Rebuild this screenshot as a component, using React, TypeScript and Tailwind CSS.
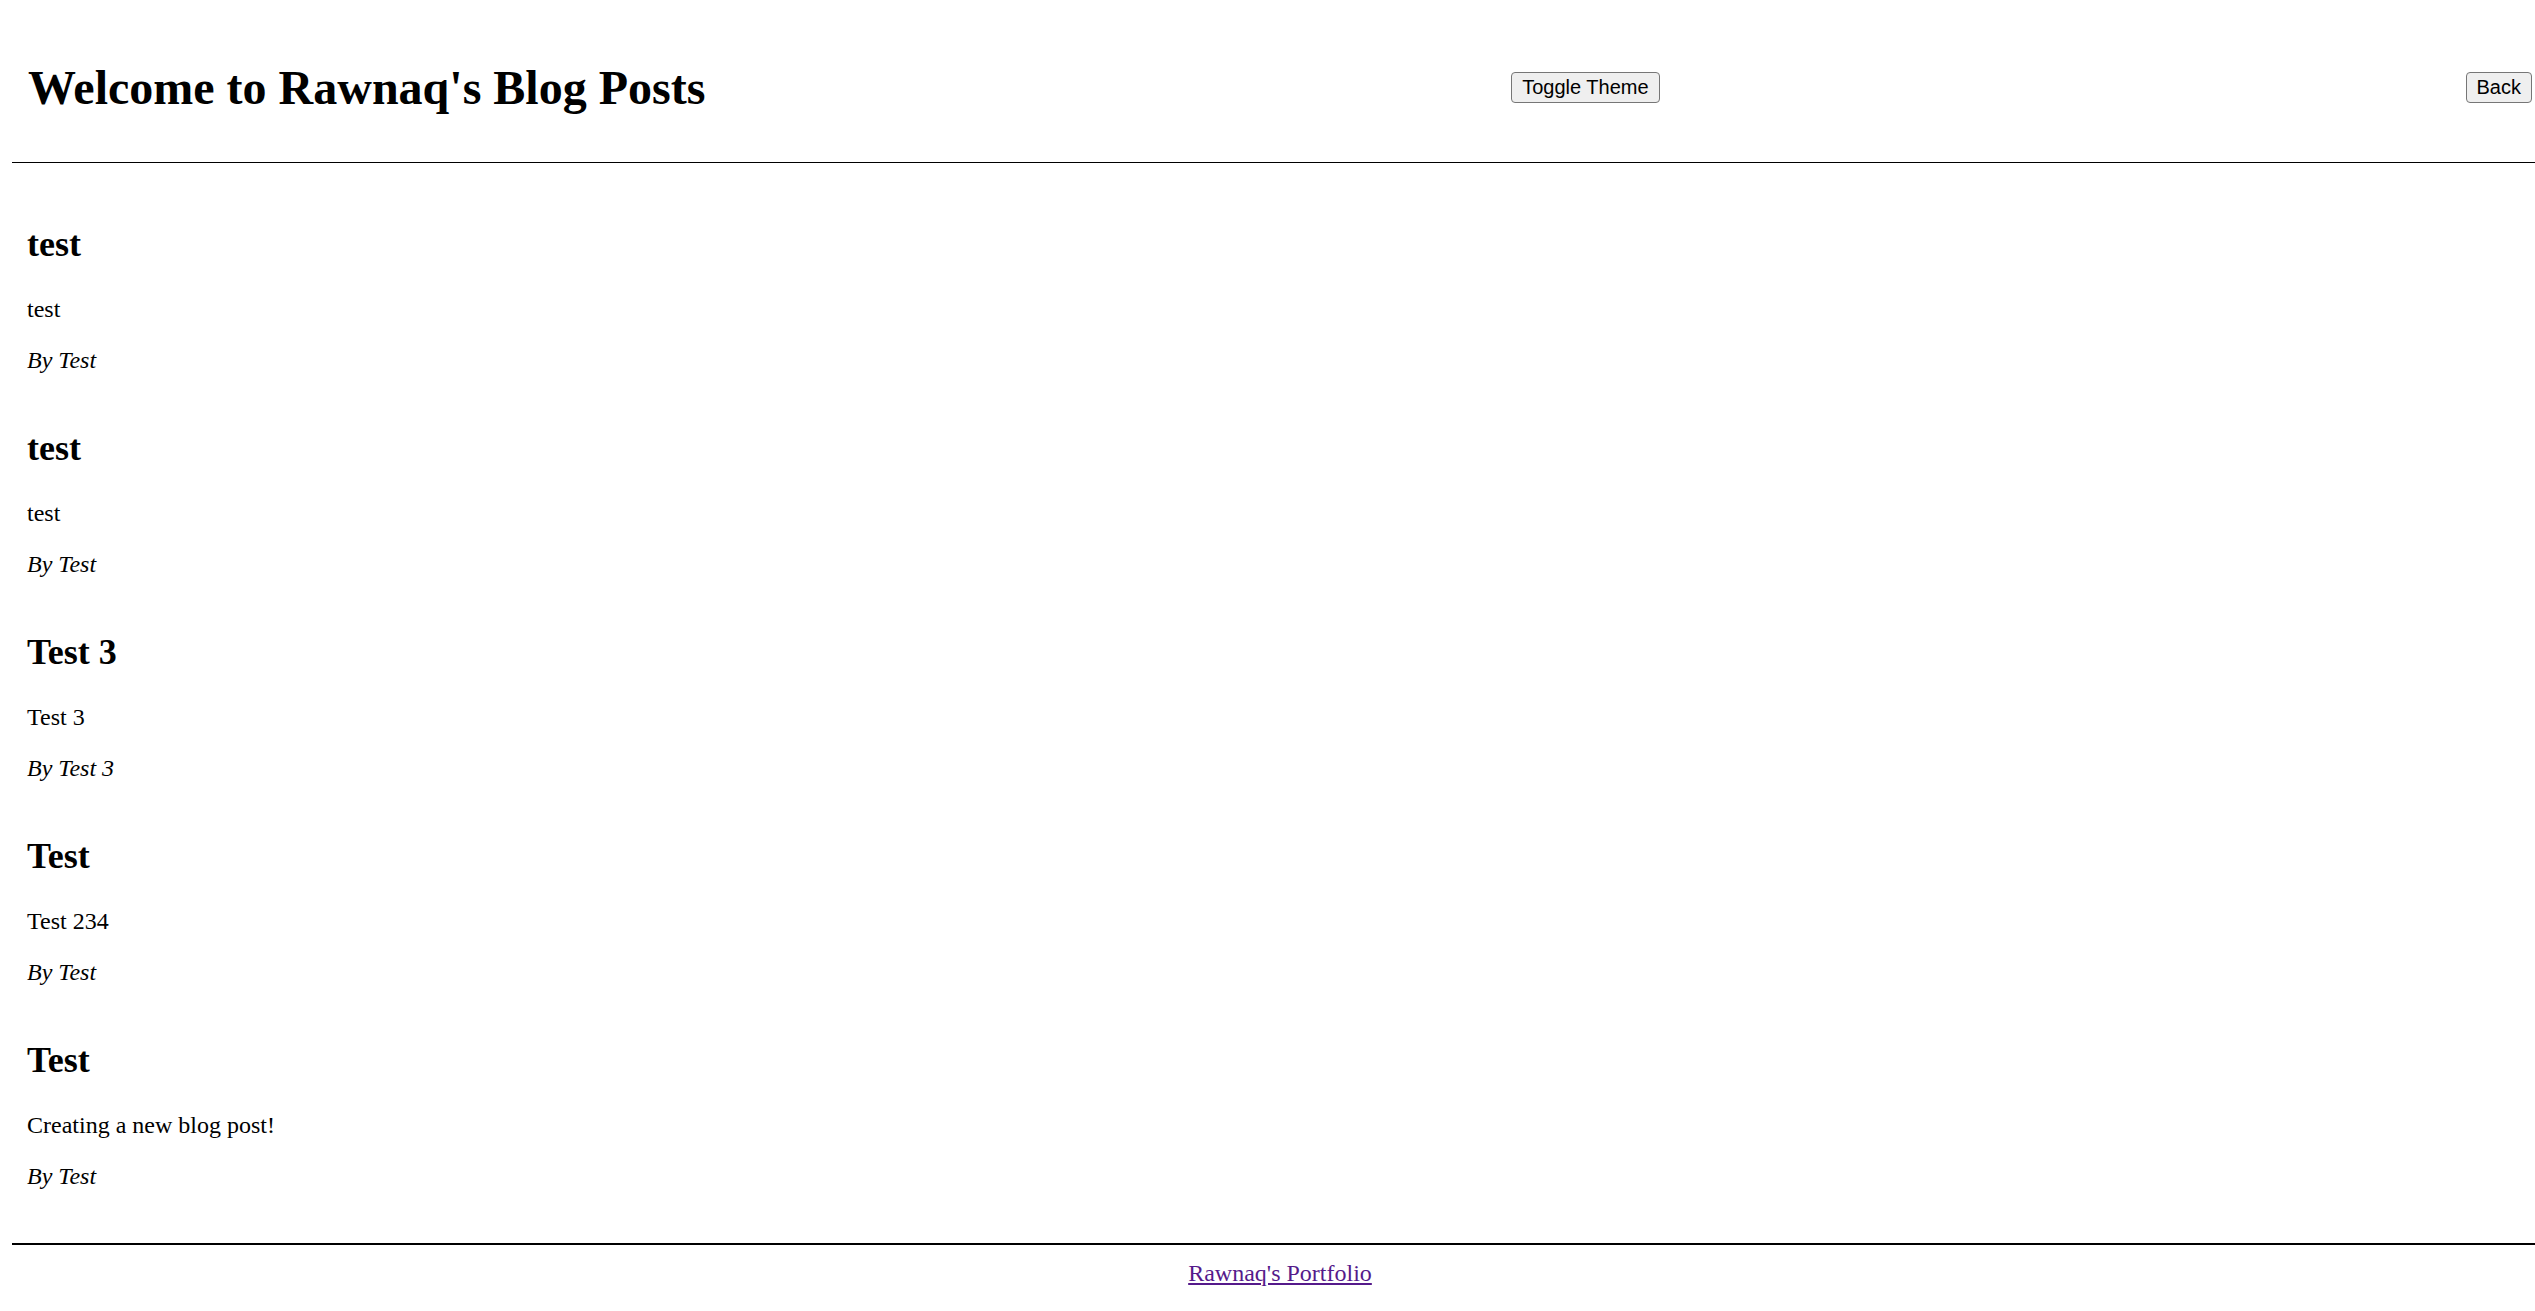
import React from "react";

const posts = [
  { title: "test", body: "test", author: "Test" },
  { title: "test", body: "test", author: "Test" },
  { title: "Test 3", body: "Test 3", author: "Test 3" },
  { title: "Test", body: "Test 234", author: "Test" },
  { title: "Test", body: "Creating a new blog post!", author: "Test" },
];

export default function App() {
  return (
    <div className="min-h-[1311px] bg-white text-black font-['Liberation_Serif','Times_New_Roman',serif] overflow-hidden">
      <header className="ml-[12px] pt-[60px] pb-[47px] pl-[16px] pr-[3px] flex items-center justify-between border-b border-black">
        <h1 className="text-[48px] leading-[55px] font-bold">Welcome to Rawnaq's Blog Posts</h1>
        <button className="font-['Liberation_Sans',Arial,sans-serif] text-[20px] leading-[23px] px-[10px] py-[3px] bg-[#efefef] border border-[#767676] rounded-[4px] text-black">
          Toggle Theme
        </button>
        <button className="font-['Liberation_Sans',Arial,sans-serif] text-[20px] leading-[23px] px-[10px] py-[3px] bg-[#efefef] border border-[#767676] rounded-[4px] text-black">
          Back
        </button>
      </header>
      <main className="pl-[27px] pt-[61px] pb-[53px] flex flex-col gap-[54px]">
        {posts.map((p, i) => (
          <div key={i} className="flex flex-col">
            <h2 className="text-[36px] leading-[41px] font-bold">{p.title}</h2>
            <p className="mt-[30px] text-[24px] leading-[28px]">{p.body}</p>
            <p className="mt-[23px] text-[24px] leading-[28px] italic">By {p.author}</p>
          </div>
        ))}
      </main>
      <footer className="ml-[12px] border-t-2 border-black pt-[14px] pl-[13px] text-center">
        <a href="#" className="text-[24px] leading-[28px] text-[#551a8b] underline">
          Rawnaq's Portfolio
        </a>
      </footer>
    </div>
  );
}
